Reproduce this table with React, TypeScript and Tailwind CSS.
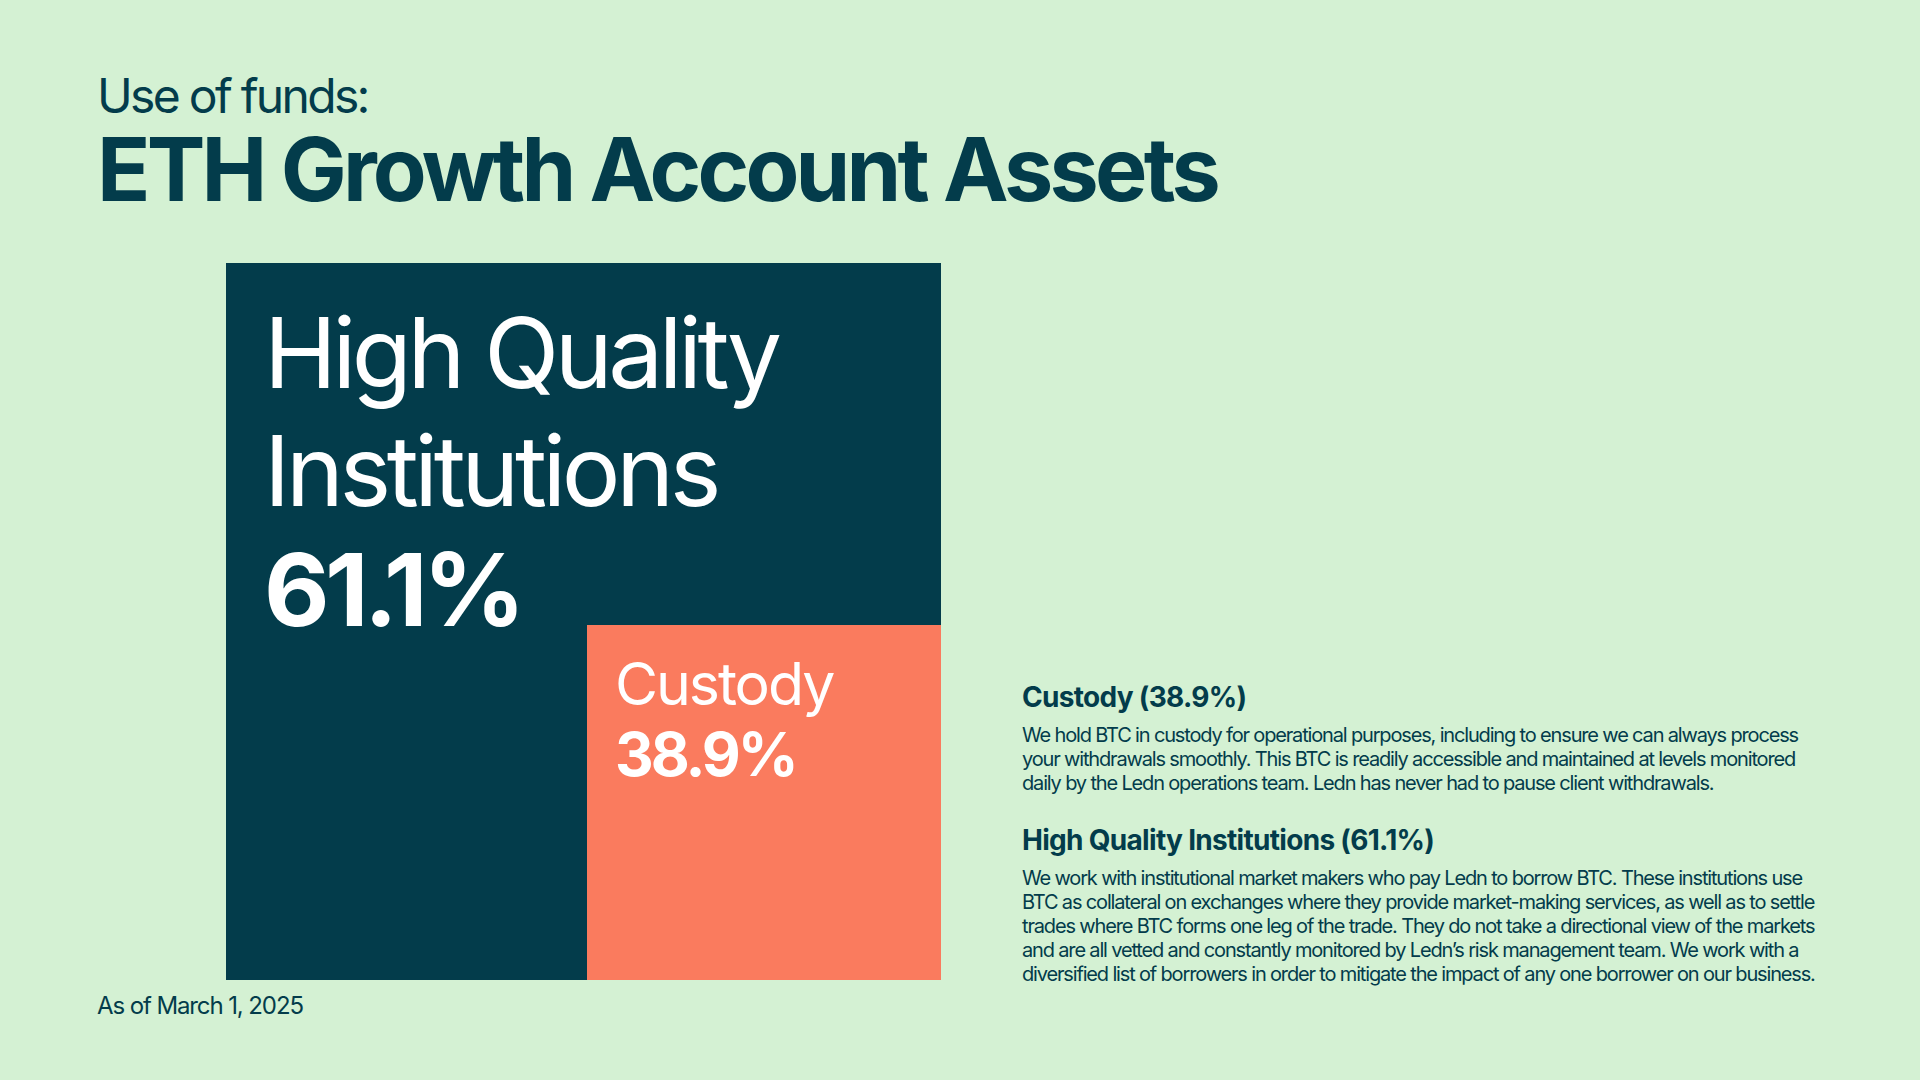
import React from 'react';

const custodyLines = [
  'We hold BTC in custody for operational purposes, including to ensure we can always process',
  'your withdrawals smoothly. This BTC is readily accessible and maintained at levels monitored',
  'daily by the Ledn operations team. Ledn has never had to pause client withdrawals.',
];

const institutionLines = [
  'We work with institutional market makers who pay Ledn to borrow BTC. These institutions use',
  'BTC as collateral on exchanges where they provide market-making services, as well as to settle',
  'trades where BTC forms one leg of the trade. They do not take a directional view of the markets',
  'and are all vetted and constantly monitored by Ledn’s risk management team. We work with a',
  'diversified list of borrowers in order to mitigate the impact of any one borrower on our business.',
];

const Section = ({ title, lines, className }: { title: string; lines: string[]; className?: string }) => (
  <div className={className}>
    <h3 className="text-[28px] leading-[34px] font-bold tracking-[-0.025em]">{title}</h3>
    <p className="mt-[9px] text-[20px] leading-[24px] tracking-[-0.058em] whitespace-nowrap">
      {lines.map((l, i) => (
        <span key={i} className="block">
          {l}
        </span>
      ))}
    </p>
  </div>
);

export default function App() {
  return (
    <div
      className="w-[1920px] h-[1080px] bg-[#d4f1d3] text-[#033c4b] overflow-hidden pl-[97px] pt-[72px]"
      style={{ fontFamily: 'Inter, "Liberation Sans", sans-serif' }}
    >
      <div className="text-[48px] leading-none tracking-[-0.056em]">Use of funds:</div>
      <h1 className="mt-[5px] text-[88px] leading-none font-bold tracking-[-0.043em]">ETH Growth Account Assets</h1>

      <div className="flex items-start h-[717px] mt-[50px]">
        {/* treemap: dark block with the custody block in its lower right */}
        <div className="ml-[129px] shrink-0 flex flex-col w-[715px] h-[717px] bg-[#033c4b] text-white">
          <div className="pl-[38px] pt-[31px] -mb-[24px]">
            <div className="text-[98px] leading-[118px] tracking-[-0.045em]">
              High Quality
              <br />
              Institutions
            </div>
            <div className="text-[101px] leading-[119px] font-bold tracking-[-0.045em]">61.1%</div>
          </div>
          <div className="mt-auto self-end shrink-0 w-[354px] h-[355px] bg-[#fa7b5e] pl-[28px] pt-[23px]">
            <div className="text-[59px] leading-[71px] tracking-[-0.035em]">Custody</div>
            <div className="text-[60px] leading-[71px] font-bold tracking-[-0.05em]">38.9%</div>
          </div>
        </div>

        <div className="ml-[81px] mt-[417px] shrink-0">
          <Section title="Custody (38.9%)" lines={custodyLines} />
          <Section className="mt-[28px]" title="High Quality Institutions (61.1%)" lines={institutionLines} />
        </div>
      </div>

      <div className="mt-[11px] text-[24px] leading-[30px] tracking-[-0.046em]">As of March 1, 2025</div>
    </div>
  );
}
